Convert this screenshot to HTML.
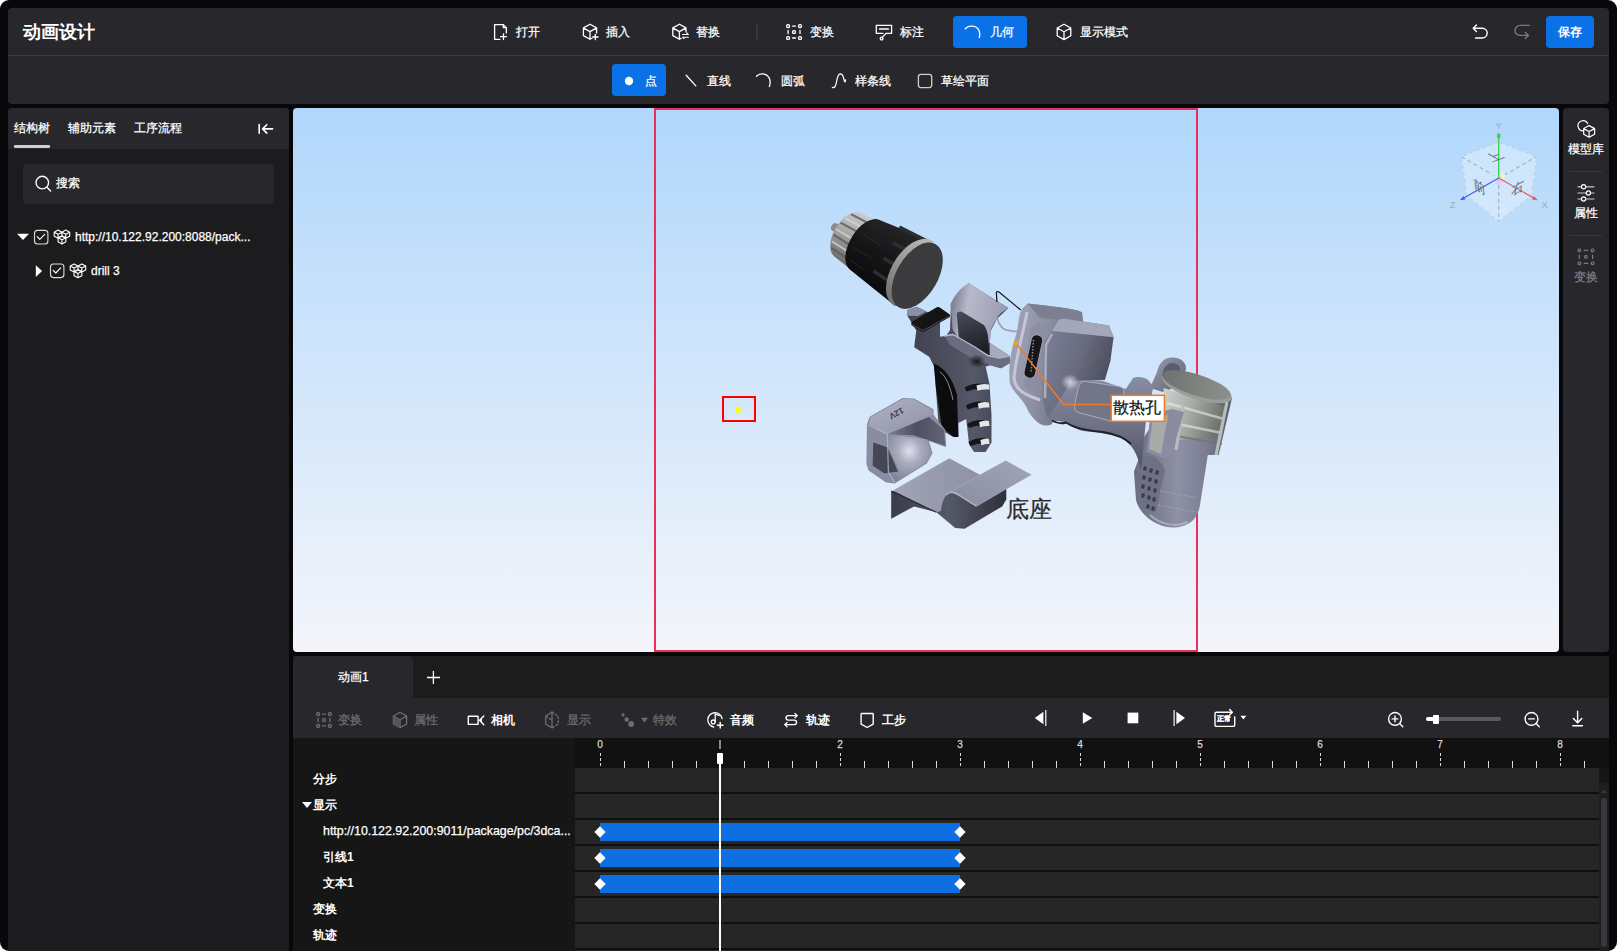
<!DOCTYPE html>
<html><head><meta charset="utf-8">
<style>
*{margin:0;padding:0;box-sizing:border-box}
html,body{width:1617px;height:951px;overflow:hidden;background:#fff}
body{font-family:"Liberation Sans",sans-serif;color:#fff;position:relative}
.abs{position:absolute}
#frame{position:absolute;left:0;top:0;width:1617px;height:951px;background:#08080b;border-radius:9px}
.panel{position:absolute;background:#28282c;border-radius:4px}
.t{position:absolute;white-space:nowrap;font-size:12.25px;line-height:16px;font-weight:500;-webkit-text-stroke:0.25px currentColor}
svg{position:absolute;overflow:visible}
</style></head><body>
<div id="frame"></div>
<!-- header -->
<div class="panel" style="left:8px;top:8px;width:1601px;height:96px"></div>
<div class="abs" style="left:8px;top:55px;width:1601px;height:1px;background:#3c3c40"></div>
<div class="t" style="left:23px;top:22px;font-size:18px;line-height:20px;font-weight:bold;-webkit-text-stroke:0">动画设计</div>


<!-- header toolbar -->
<svg style="left:0;top:0" width="1617" height="110" fill="none" stroke="#fff" stroke-width="1.3" stroke-linejoin="round" stroke-linecap="round">
 <!-- open -->
 <path d="M500 39.3H494.6V24.6H503.3L506.3 27.6V33"/><path d="M503.3 24.6V27.6H506.3"/>
 <path d="M503.5 33.8V39.6M500.6 36.7H506.4"/>
 <!-- insert cube -->
 <path d="M590 24.3L596.6 27.9V33M590 24.3L583.4 27.9V35.6L590 39.3L592 38.2M583.4 27.9L590 31.6L596.6 27.9M590 31.6V39.3"/>
 <path d="M595.3 34.3V39.7M592.6 37H598"/>
 <!-- replace cube -->
 <path d="M679.4 24.3L686 27.9V32M679.4 24.3L672.8 27.9V35.6L679.4 39.3L681 38.4M672.8 27.9L679.4 31.6L686 27.9M679.4 31.6V39.3"/>
 <path d="M682.5 34.5H688.3L686.8 33M688.3 37.2H682.5L684 38.7" stroke-width="1.1"/>
 <!-- separator -->
 <path d="M757 23.5V39.5" stroke="#48484c" stroke-width="1"/>
 <!-- transform -->
 <g stroke-width="1.3">
 <rect x="786.7" y="24.7" width="2.8" height="2.8" rx="1"/><rect x="798.6" y="24.7" width="2.8" height="2.8" rx="1"/>
 <rect x="786.7" y="36.6" width="2.8" height="2.8" rx="1"/><rect x="798.6" y="36.6" width="2.8" height="2.8" rx="1"/>
 <rect x="792.6" y="30.6" width="2.8" height="2.8" rx="1"/>
 <path d="M792.5 26.1H795.5M792.5 38H795.5M788.1 30.5V33.5M800 30.5V33.5"/>
 </g>
 <!-- annotate -->
 <path d="M883 33.3H876.3V25.3H891.6V33.3H886.3L882.6 36.9"/>
 <path d="M879.5 29H888.5" stroke-width="1.3"/>
 <circle cx="881.6" cy="38.6" r="1.4"/>
 <!-- display mode cube -->
 <path d="M1064 24.2L1070.8 28V35.8L1064 39.6L1057.2 35.8V28ZM1057.2 28L1064 31.8L1070.8 28M1064 31.8V39.6"/>
</svg>
<div class="t" style="left:516px;top:24px">打开</div>
<div class="t" style="left:606px;top:24px">插入</div>
<div class="t" style="left:696px;top:24px">替换</div>
<div class="t" style="left:810px;top:24px">变换</div>
<div class="t" style="left:900px;top:24px">标注</div>
<div class="abs" style="left:953px;top:16px;width:74px;height:32px;background:#0a71e6;border-radius:4px"></div>
<svg style="left:0;top:0" width="1100" height="60" fill="none" stroke="#fff" stroke-width="1.4" stroke-linecap="round"><path d="M965.2 28.8C968.5 25 976.5 25 979 30.5C980 32.5 980 35 979.3 37.4"/></svg>
<div class="t" style="left:990px;top:24px">几何</div>
<div class="t" style="left:1080px;top:24px">显示模式</div>

<!-- undo redo save -->
<svg style="left:0;top:0" width="1617" height="60" fill="none" stroke-width="1.4" stroke-linecap="round" stroke-linejoin="round">
 <path d="M1473.3 28.2H1482.2C1485.1 28.2 1487.2 30.4 1487.2 33.1C1487.2 35.8 1485.1 38 1482.2 38H1475.5M1476.4 25L1473.2 28.2L1476.4 31.4" stroke="#fff"/>
 <path d="M1529.3 25.4H1520.2C1517.2 25.4 1515 27.7 1515 30.4C1515 33.1 1517.2 35.4 1520.2 35.4H1528.2M1525.2 32.2L1528.4 35.4L1525.2 38.6" stroke="#7a7a7e"/>
</svg>
<div class="abs" style="left:1546px;top:16px;width:48px;height:32px;background:#0a71e6;border-radius:4px"></div>
<div class="t" style="left:1558px;top:24px;font-weight:bold;-webkit-text-stroke:0">保存</div>

<!-- sub toolbar -->
<div class="abs" style="left:612px;top:64px;width:54px;height:32px;background:#0a71e6;border-radius:4px"></div>
<svg style="left:0;top:0" width="1617" height="110" fill="none" stroke="#fff" stroke-width="1.3" stroke-linecap="round">
 <circle cx="629" cy="81" r="4.2" fill="#fff" stroke="none"/>
 <path d="M686.2 75.3L695.8 85.9"/>
 <path d="M756.5 76.2C759.5 72.8 766.5 73 769.2 78C770.4 80.5 770.4 83.6 769.4 86.5"/>
 <path d="M832.4 87.4C834.5 88.5 835.8 86 836.5 82C837.3 77 838.2 74 840.3 73.9C842.3 73.9 843.2 76 843.8 78.8C844.4 81.5 845 83.5 845.6 80" />
 <rect x="918.4" y="74.3" width="13.3" height="13.3" rx="2.5" stroke="#d0d0d0"/>
</svg>
<div class="t" style="left:645px;top:73px">点</div>
<div class="t" style="left:707px;top:73px">直线</div>
<div class="t" style="left:781px;top:73px">圆弧</div>
<div class="t" style="left:855px;top:73px">样条线</div>
<div class="t" style="left:941px;top:73px">草绘平面</div>

<!-- left panel -->
<div class="panel" style="left:8px;top:108px;width:281px;height:843px;background:#1c1c1e;border-radius:4px 4px 0 0"></div>
<div class="abs" style="left:8px;top:108px;width:281px;height:41px;background:#28282c;border-radius:4px 4px 0 0"></div>


<!-- left panel contents -->
<div class="t" style="left:14px;top:120px;font-size:12px">结构树</div>
<div class="t" style="left:68px;top:120px;font-size:12px">辅助元素</div>
<div class="t" style="left:134px;top:120px;font-size:12px">工序流程</div>
<div class="abs" style="left:14px;top:145px;width:36px;height:3px;background:#cfcfd2;border-radius:1px"></div>
<svg style="left:0;top:0" width="300" height="300" fill="none" stroke="#fff" stroke-width="1.4" stroke-linecap="round" stroke-linejoin="round">
 <path d="M259.2 124.5V133.3M262.6 128.9H272.6M266.8 124.7L262.6 128.9L266.8 133.1" stroke-width="1.6"/>
</svg>
<div class="abs" style="left:23px;top:164px;width:251px;height:40px;background:#28282c;border-radius:4px"></div>
<svg style="left:0;top:0" width="300" height="300" fill="none" stroke="#fff" stroke-width="1.4" stroke-linecap="round">
 <circle cx="42.3" cy="182.6" r="6.3"/><path d="M47 187.3L50.6 190.9"/>
</svg>
<div class="t" style="left:56px;top:175px;font-size:12px">搜索</div>
<!-- tree -->
<svg style="left:0;top:0" width="300" height="300" fill="none" stroke="#fff" stroke-width="1.1" stroke-linecap="round" stroke-linejoin="round">
 <path d="M17 233.7H29L23 240Z" fill="#fff" stroke="none"/>
 <rect x="34.5" y="230.4" width="13.4" height="13.6" rx="3" stroke="#ddd"/>
 <path d="M37.2 236.7L39.8 239.4L44.7 234.3"/>
 <path d="M35.8 265.2V277L42.1 271.1Z" fill="#fff" stroke="none"/>
 <rect x="50.5" y="264" width="13.4" height="13.6" rx="3" stroke="#ddd"/>
 <path d="M53.2 270.3L55.8 273L60.7 267.9"/>
</svg>
<svg style="left:0;top:0" width="300" height="300" fill="none" stroke="#fff" stroke-width="1.1" stroke-linejoin="round">
 <g id="mdl"><path d="M58.1 230.1L62.0 232.14999999999998V236.25L58.1 238.29999999999998L54.2 236.25V232.14999999999998ZM54.2 232.14999999999998L58.1 234.2L62.0 232.14999999999998M58.1 234.2V238.29999999999998M65.8 230.1L69.7 232.14999999999998V236.25L65.8 238.29999999999998L61.9 236.25V232.14999999999998ZM61.9 232.14999999999998L65.8 234.2L69.7 232.14999999999998M65.8 234.2V238.29999999999998M61.95 235.70000000000002L65.85000000000001 237.75V241.85000000000002L61.95 243.9L58.050000000000004 241.85000000000002V237.75ZM58.050000000000004 237.75L61.95 239.8L65.85000000000001 237.75M61.95 239.8V243.9"/></g>
 <use href="#mdl" x="16" y="33.8"/>
</svg>
<div class="t" style="left:75px;top:229px;font-size:12px">http://10.122.92.200:8088/pack...</div>
<div class="t" style="left:91px;top:262.5px;font-size:12px">drill 3</div>

<!-- viewport -->
<div class="abs" style="left:293px;top:108px;width:1266px;height:544px;border-radius:4px;background:linear-gradient(#b0d7fc,#f4f5fa)"></div>


<!-- viewport overlay -->
<div class="abs" style="left:654px;top:108px;width:544px;height:544px;border:2px solid #e8305a"></div>
<div class="abs" style="left:722px;top:396px;width:34px;height:26px;border:2px solid #f00"></div>
<div class="abs" style="left:734.7px;top:406.7px;width:6.6px;height:6.6px;border-radius:50%;background:#ff0"></div>
<svg style="left:0;top:0" width="1617" height="951">
 <defs>
  <linearGradient id="gSil" x1="0" y1="0" x2="0.3" y2="1"><stop offset="0" stop-color="#d4d4d4"/><stop offset="0.5" stop-color="#a8a8a8"/><stop offset="1" stop-color="#5a5a5a"/></linearGradient>
  <linearGradient id="gBlk" x1="0" y1="0" x2="0.4" y2="1"><stop offset="0" stop-color="#2a2a2c"/><stop offset="1" stop-color="#0e0e10"/></linearGradient>
  <linearGradient id="gBody" x1="0" y1="0" x2="1" y2="1"><stop offset="0" stop-color="#a9acbe"/><stop offset="0.45" stop-color="#8a8da0"/><stop offset="1" stop-color="#5f6273"/></linearGradient>
  <linearGradient id="gBlock" x1="0" y1="0" x2="1" y2="0.5"><stop offset="0" stop-color="#80839a"/><stop offset="0.55" stop-color="#6a6d80"/><stop offset="1" stop-color="#4a4c5a"/></linearGradient>
  <linearGradient id="gBarrel" x1="0" y1="0" x2="0" y2="1"><stop offset="0" stop-color="#8a8da2"/><stop offset="0.55" stop-color="#6e7184"/><stop offset="1" stop-color="#4e5060"/></linearGradient>
  <linearGradient id="gPack" x1="0" y1="0" x2="1" y2="0"><stop offset="0" stop-color="#6a6d80"/><stop offset="0.45" stop-color="#8e91a5"/><stop offset="0.75" stop-color="#7a7d92"/><stop offset="1" stop-color="#55586a"/></linearGradient>
  <linearGradient id="gBell" x1="0" y1="0" x2="1" y2="0.3"><stop offset="0" stop-color="#cfd3cf"/><stop offset="0.5" stop-color="#a9ada9"/><stop offset="1" stop-color="#6f736f"/></linearGradient>
  <linearGradient id="gCap" x1="0" y1="0" x2="1" y2="0"><stop offset="0" stop-color="#6e726e"/><stop offset="1" stop-color="#8e928e"/></linearGradient>
  <linearGradient id="gHandle" x1="0" y1="0" x2="1" y2="0"><stop offset="0" stop-color="#3e404c"/><stop offset="0.65" stop-color="#555868"/><stop offset="1" stop-color="#3a3c48"/></linearGradient>
  <linearGradient id="gShield" x1="0" y1="0" x2="1" y2="0.2"><stop offset="0" stop-color="#6a6d80"/><stop offset="0.35" stop-color="#b8bacb"/><stop offset="1" stop-color="#9a9db0"/></linearGradient>
  <linearGradient id="gBase" x1="0" y1="0" x2="1" y2="0"><stop offset="0" stop-color="#a2a5b8"/><stop offset="1" stop-color="#8e91a4"/></linearGradient>
  <linearGradient id="gBaseD" x1="0" y1="0" x2="1" y2="0"><stop offset="0" stop-color="#3a3c48"/><stop offset="0.5" stop-color="#555868"/><stop offset="1" stop-color="#2e3038"/></linearGradient>
  <radialGradient id="gCup" cx="0.5" cy="0.35" r="0.65"><stop offset="0" stop-color="#dfe1ec"/><stop offset="0.4" stop-color="#a9acbe"/><stop offset="1" stop-color="#80839a"/></radialGradient>
  <linearGradient id="gSil2" x1="0" y1="0" x2="0" y2="1"><stop offset="0" stop-color="#cfcfcf"/><stop offset="0.45" stop-color="#a9a9a9"/><stop offset="1" stop-color="#6a6a6a"/></linearGradient>
  <linearGradient id="gBlk2" x1="0" y1="0" x2="0" y2="1"><stop offset="0" stop-color="#262628"/><stop offset="0.5" stop-color="#161618"/><stop offset="1" stop-color="#0a0a0c"/></linearGradient>
  <linearGradient id="gRing" x1="0" y1="0" x2="0" y2="1"><stop offset="0" stop-color="#b8b8b8"/><stop offset="1" stop-color="#6e6e6e"/></linearGradient>
  <linearGradient id="gPlate" x1="0" y1="0" x2="1" y2="0.3"><stop offset="0" stop-color="#a4a7ba"/><stop offset="0.5" stop-color="#8e91a4"/><stop offset="1" stop-color="#6a6d80"/></linearGradient>
  <linearGradient id="gBump" x1="0" y1="0" x2="1" y2="1"><stop offset="0" stop-color="#9a9db0"/><stop offset="1" stop-color="#5e6172"/></linearGradient>
  <linearGradient id="gWall" x1="0" y1="0" x2="1" y2="0"><stop offset="0" stop-color="#7a7d90"/><stop offset="0.5" stop-color="#4e5060"/><stop offset="1" stop-color="#626578"/></linearGradient>
  <linearGradient id="gTop12" x1="0" y1="0" x2="1" y2="1"><stop offset="0" stop-color="#b0b3c4"/><stop offset="1" stop-color="#8e91a5"/></linearGradient>
  <linearGradient id="gBase2" x1="0" y1="1" x2="1" y2="0"><stop offset="0" stop-color="#8a8da0"/><stop offset="1" stop-color="#a2a5b8"/></linearGradient>
  <linearGradient id="gTongue" x1="0" y1="0" x2="0.3" y2="1"><stop offset="0" stop-color="#4a4c58"/><stop offset="1" stop-color="#1e1f26"/></linearGradient>
  <radialGradient id="gShadow"><stop offset="0" stop-color="#0a0a0c" stop-opacity="0.8"/><stop offset="1" stop-color="#0a0a0c" stop-opacity="0"/></radialGradient>
  <radialGradient id="gHi"><stop offset="0" stop-color="#e4e6f2" stop-opacity="0.85"/><stop offset="1" stop-color="#e4e6f2" stop-opacity="0"/></radialGradient>
 </defs>

 <!-- CHUCK -->
 <g transform="translate(917.2 275.7) rotate(30.4)">
  <path d="M-96 -4.2H-88V4.2H-96A3 4.2 0 0 1 -96 -4.2Z" fill="#8a8a8a"/>
  <path d="M-58 -28.5L-80 -25.5A14.5 25.5 0 0 0 -80 25.5L-58 28.5Z" fill="url(#gSil2)"/>
  <path d="M-88 -19.5L-60 -21M-93 -7L-60 -8M-93 7L-60 8M-88 19.5L-60 21" stroke="#5c5c5c" stroke-width="2.2" opacity="0.8"/>
  <path d="M-91 -13L-60 -14.5M-94 1L-60 1M-91 13.5L-60 14.5" stroke="#dadada" stroke-width="2" opacity="0.7"/>
  <path d="M-4 -37.2L-60 -29A16 29 0 0 0 -60 29L-4 37.2Z" fill="url(#gBlk2)"/>
  <path d="M-40 -33L-8 -35M-38 -16L-8 -18M-38 2L-8 2M-40 18L-8 20" stroke="#2e2e30" stroke-width="3.5"/>
  <path d="M-66 -20L-60 -20M-70 -8L-48 -8M-70 8L-48 8M-66 20L-50 22" stroke="#333" stroke-width="1" opacity="0.6"/>
  <ellipse cx="-6" cy="0" rx="20.8" ry="37.3" fill="url(#gRing)"/>
  <ellipse cx="0" cy="0" rx="20.5" ry="36.6" fill="#3b3b3d"/>
 </g>
 <!-- HANDLE -->
 <path d="M907.5 310L916.8 306.8L926.3 311.6L940 318L940 336.8L946.3 335.7L950 330L951 304L968.4 283.2L1008.3 307.9L996.8 318.9L990.4 331.5L989.9 343.1L1009.4 355.7L1009.9 363.1L1001 368.3L990.4 365.2L985.6 366.5L989.5 384L991.5 415.1L991.5 442.4L985.6 452.1L974 452.1L969.1 444.3L966.2 419L958.4 422.9L958.4 436.5L952.5 436.5L938.9 428.8L934.1 366.5L929.2 356.7L914.2 347.3L914.7 343.1L916.3 330.5L907.4 315.8Z" fill="url(#gHandle)"/>
 <path d="M907.5 310L916.8 306.8L926.3 311.6L918 316L907.4 315.8Z" fill="#8c90a4"/>
 <path d="M933.8 363.8C945 368 952 378 957 394.7L958.4 437L953.7 437C948 433 944 429 941.6 425.6L936 388Z" fill="#0c0c0e"/>
 <path d="M940 372C946 376 950 386 953 400" stroke="#8a8c98" stroke-width="1" fill="none"/>
 <path d="M950.5 304.2C954 296 960 288 968.4 283.2L1008.3 307.9C1002 312 998 315 996.8 318.9C992 325 990.4 331.5 990.4 331.5L989.9 343.1L958.9 338.9L952.6 329.4Z" fill="url(#gShield)"/>
 <path d="M956.8 313.7C958 311 961 311 963.1 312.6L984.1 325.2C988 331 988.3 338.9 988.3 338.9L989.4 355.7L958.9 338.9Z" fill="url(#gTongue)"/>
 <path d="M945 336L951 334L975 347L990 357L1000 358L1009.4 355.7L1009.9 363.1L1001 368.3L990 365L975 360L950 345Z" fill="#6a6d80"/>
 <path d="M944 336L953 334.5L974 346.5L988 355.5L999 358L1009.5 356" stroke="#b8bbcc" stroke-width="1.4" fill="none"/>
 <path d="M989.9 343.1L1009.4 355.7L1000 358L990 355Z" fill="#a9acbe"/>
 <ellipse cx="977" cy="361" rx="9" ry="7" fill="url(#gShadow)"/>
 <g><path d="M964.5 387.5Q974.5 381.5 988.5 384.5L989 389.5Q976.5 387.5 966.5 391.5Z" fill="#16161a"/><path d="M976.5 385.5Q982.5 383.0 989 384.5L989.5 389.5Q982.5 389.0 977.5 390.7Z" fill="#e4e6ee"/><path d="M965.8 405.5Q975.8 399.5 988.5 402.5L989 407.5Q977.8 405.5 967.8 409.5Z" fill="#16161a"/><path d="M977.8 403.5Q983.8 401.0 989 402.5L989.5 407.5Q983.8 407.0 978.8 408.7Z" fill="#e4e6ee"/><path d="M967.1 424Q977.1 418 988.5 421L989 426Q979.1 424 969.1 428Z" fill="#16161a"/><path d="M979.1 422Q985.1 419.5 989 421L989.5 426Q985.1 425.5 980.1 427.2Z" fill="#e4e6ee"/><path d="M968.4 442Q978.4 436 988.5 439L989 444Q980.4 442 970.4 446Z" fill="#16161a"/><path d="M980.4 440Q986.4 437.5 989 439L989.5 444Q986.4 443.5 981.4 445.2Z" fill="#e4e6ee"/></g>
 <path d="M911.6 322.1L936.8 307.3Q938 306.5 939.5 307.3L949.4 314.2Q950.5 315 950 316.5L949.4 317.3L924.2 331.5Q922.8 332.2 921.5 331.5L911.6 325.2Q910.8 323.5 911.6 322.1Z" fill="#141416"/>
 <path d="M912 324.5L923 330.5L949.5 316" stroke="#50505a" stroke-width="1" fill="none"/>
 <path d="M996.3 292.5Q997 291 999 292L1020.7 310M996.3 292.5L997 302" stroke="#1a1a1e" stroke-width="1.3" fill="none"/>
 <path d="M997 318Q1000 328 1006 330L1019 332" stroke="#9a9cab" stroke-width="1.6" fill="none"/>
 <!-- 12V BATTERY CAP -->
 <path d="M867.9 424.7L870.5 417.3L903.1 398.9L913.6 399.5L932.6 410L932.6 415.2L944.1 430L945.2 445.7L927.3 439.4L931.5 453.1L926.2 462.6L894.7 482.5L886.3 481.5L869.5 469.9L867.4 463.6Z" fill="#8a8da2" stroke="#8a8da2" stroke-width="2" stroke-linejoin="round"/>
 <path d="M923 412L944.1 430L945.2 445.7L913.6 435.2L887.3 434.2Z" fill="url(#gWall)"/>
 <path d="M887.3 434.2L927.3 439.4L931.5 453.1L926.2 462.6L894.7 482.5L888.4 472Z" fill="url(#gCup)"/>
 <path d="M870.5 417.3L903.1 398.9L913.6 399.5L932.6 410L932.6 415.2L887.3 434.2L869 424Z" fill="url(#gTop12)"/>
 <text x="0" y="0" transform="translate(896.5 413.5) rotate(151)" font-size="8.5" font-family="Liberation Sans, sans-serif" font-weight="bold" fill="#3a3c48" text-anchor="middle" dominant-baseline="central">12V</text>
 <path d="M872.6 441.5L888 447L898.9 472L884 474L872 466Z" fill="#444756" stroke="#8e91a4" stroke-width="1.2"/>
 <path d="M867.9 424.7L887.3 434.2L888.4 472L894.7 482.5" stroke="#b6b9ca" stroke-width="1.2" fill="none" opacity="0.8"/>
 <!-- BASE -->
 <path d="M891.2 491.1V518.7L914.1 506.4L936.4 512.3L955.2 528.1L964.6 528.7L1002.2 506.4L1006.3 499.4V488.8L976.4 506.4C968 502 958 494 950 492L945.8 494.7Z" fill="url(#gBaseD)"/>
 <path d="M892.9 490.5L949.3 458.2L979.9 474.7L950.5 492.3C946 494 942 500 941 511.1L936.4 512.3Z" fill="url(#gBase)"/>
 <path d="M950.5 492.3L979.9 474.7L1005.7 460.6L1031.6 474.7L976.4 506.4C968 502 958 494 950.5 492.3Z" fill="url(#gBase2)"/>
 <path d="M946 495C950 491 956 492 962 497L976 506" stroke="#b4b7c8" stroke-width="1.2" fill="none"/>
 <path d="M891.2 491.1L936.4 512.3" stroke="#2a2c36" stroke-width="1.2"/>
 <!-- MAIN BODY -->
 <!-- rear bump -->
 <path d="M1150 388L1157 372C1159 364 1163 358 1171 357.5C1180 357 1186 362 1186 368L1183 384L1163 392Z" fill="url(#gBump)"/><path d="M1162 376C1163 368 1167 363 1172 363C1178 363 1181 367 1180 372L1178 380Z" fill="#5a5d70"/>
 <!-- pack -->
 <path d="M1142 440L1165 405L1232 398L1218.7 455L1207.8 455L1200 505C1198 518 1190 527.5 1172 527.5C1155 526.5 1140 515 1136 500L1134 471.4L1142.2 449.5Z" fill="url(#gPack)"/>
 <path d="M1140 458C1150 452 1160 458 1165 470L1156 512C1148 512 1138 505 1137 495Z" fill="#6e7184"/>
 <g fill="#3a3c48"><path d="M1144 466l3 1-1 4-3-1zM1150 468l3 1-1 4-3-1zM1156 470l3 1-1 4-3-1zM1143 475l3 1-1 4-3-1zM1149 477l3 1-1 4-3-1zM1155 479l3 1-1 4-3-1zM1142 484l3 1-1 4-3-1zM1148 486l3 1-1 4-3-1zM1154 488l3 1-1 4-3-1zM1142 493l3 1-1 4-3-1zM1148 495l3 1-1 4-3-1zM1153 497l3 1-1 4-3-1zM1147 504l3 1-1 4-3-1zM1152 506l3 1-1 4-3-1z"/></g>
 <path d="M1160 491L1198 498M1158 505L1196 512" stroke="#a8abbc" stroke-width="0.8" stroke-dasharray="2 1.5" fill="none"/>
 <path d="M1150 515C1160 524 1175 528 1188 522" stroke="#c4c7d6" stroke-width="2" fill="none" opacity="0.6"/>
 <!-- back plate -->
 <path d="M1027.6 303.4C1060 307 1075 309 1082 312.1L1082.8 321.6L1052 424C1042 430 1032 418 1027.6 409.9C1024 400 1016 396 1010 384C1007.5 366 1012 346 1016 335C1019 325 1018 315 1022 308.9Z" fill="url(#gPlate)"/>
 <path d="M1027.6 303.4C1060 307 1075 309 1082 312.1L1082.8 321.6L1040 318Z" fill="#7c7f92"/>
 <path d="M1027 312C1024 330 1016 356 1014 378C1015 388 1022 393 1032 397L1040 400" stroke="#c9cbd9" stroke-width="3" fill="none" opacity="0.9"/>
 <path d="M1038 322C1046 326 1046 340 1044 350L1040 392C1034 392 1026 390 1024 385L1030 330Z" fill="#8a8da0" opacity="0.7"/>
 <rect x="1027.6" y="334.5" width="11.5" height="44" rx="5" transform="rotate(12.5 1033.4 356.5)" fill="#17171b" stroke="#9ea1b2" stroke-width="1"/>
 <path d="M1033.5 340L1031 373" stroke="#8a8a90" stroke-width="1.5" stroke-dasharray="1.5 1.5"/>
 <!-- front block -->
 <path d="M1058.4 320L1063.1 318.4L1108.9 325.5L1113.6 337.3L1110.4 361L1104.9 379.9L1085 381L1075 383L1060 400L1047.3 418L1042.6 400.4L1044.2 342.1L1052.1 331Z" fill="url(#gBlock)"/>
 <path d="M1058.4 320L1063.1 318.4L1108.9 325.5L1113.6 337.3L1062 332L1052.1 331Z" fill="#a4a7ba"/>
 <path d="M1052 334L1046 345L1045 398" stroke="#b8bbcc" stroke-width="2.5" fill="none" opacity="0.8"/>
 <!-- barrel -->
 <path d="M1068 386C1074 381 1078 380 1083 380.3L1103 380.9L1125.8 389.1L1133.3 377.7C1140 376 1146 378 1148.4 380.3L1153.5 386.6L1146 420L1141 470C1138 455 1132 444 1122 438.3C1110 433 1090 432 1081.6 430.7C1074 428 1068 424 1065.2 421.9L1052.6 420.6L1047.3 418L1060 400Z" fill="url(#gBarrel)"/>
 <path d="M1086 381.5L1119 386.5Q1125 388 1123.5 394L1118.5 416Q1117 421.5 1111 421L1080 413Q1073.5 411 1074.5 405L1078.5 387Q1080 381 1086 381.5Z" fill="#737689" stroke="#a9acbd" stroke-width="1"/>
 <path d="M1052 420.5C1058 424 1062 424 1066 422.5C1074 428 1090 431 1103 432C1115 434 1125 438 1131 444" stroke="#1e2028" stroke-width="2" fill="none"/>
 <ellipse cx="1070" cy="382" rx="9" ry="8" fill="url(#gHi)"/>
 <!-- battery bell and cap -->
 <path d="M1163.5 387.9L1226 406.8L1222 438L1176.8 440L1165 420Z" fill="url(#gBell)"/>
 <path d="M1167 403L1224 419M1168 422L1222 433" stroke="#e8ece8" stroke-width="2.5" opacity="0.6"/>
 <path d="M1165 434L1222 444" stroke="#6e726e" stroke-width="2" opacity="0.7"/>
 <ellipse cx="1197" cy="388" rx="36.5" ry="11" transform="rotate(17.5 1197 388)" fill="#9a9e9a"/>
 <ellipse cx="1196.5" cy="385" rx="36" ry="10.5" transform="rotate(17.5 1196.5 385)" fill="url(#gCap)"/>
 <path d="M1183 405L1176 450M1227 402L1216 455" stroke="#b9bdb9" stroke-width="3.2"/>
 <path d="M1150.3 414.4L1172 409L1184 412L1170 460L1146.5 452Z" fill="#8a8da2"/>
 <path d="M1153 418L1168 415L1161 454L1149 449Z" fill="#a9aba9"/>
 <!-- LEADER + LABELS -->
 <path d="M1015.9 342.9L1063.4 404.4H1111" stroke="#f07a22" stroke-width="1.5" fill="none"/>
 <circle cx="1015.9" cy="342.9" r="2.3" fill="#f5a020"/>
 <rect x="1111.2" y="395.3" width="53.2" height="26" fill="#fff" stroke="#f07a22" stroke-width="1.5"/>
</svg>
<div class="t" style="left:1113px;top:398px;font-size:16px;line-height:20px;color:#111">散热孔</div>
<div class="t" style="left:1006px;top:496px;font-size:23px;line-height:27px;color:#2a2a2a;font-family:'Liberation Serif',serif;font-weight:300">底座</div>


<!-- view cube -->
<svg style="left:0;top:0" width="1617" height="300" font-family="Liberation Sans, sans-serif">
 <path d="M1498.7 142.2L1536.5 156.7L1531.5 195.8L1498.7 221L1467 195.8L1461.5 156.7Z" fill="#fff" fill-opacity="0.32" stroke="#fff" stroke-opacity="0.35" stroke-width="0.8"/>
 <path d="M1461.5 156.7L1498.7 178.1L1536.5 156.7M1498.7 178.1V221" stroke="#a8b0ba" stroke-width="1.2" stroke-dasharray="4 3" fill="none"/>
 <path d="M1498.7 142.2L1536.5 156.7L1531.5 195.8L1498.7 221L1467 195.8L1461.5 156.7Z" fill="none" stroke="#b8c4d0" stroke-width="0.8" stroke-dasharray="4 3"/>
 <circle cx="1495" cy="176" r="3.6" fill="#bff0ff" fill-opacity="0.7"/><circle cx="1502" cy="176" r="3.6" fill="#f0f8c8" fill-opacity="0.7"/><circle cx="1498.7" cy="181.5" r="3.6" fill="#e8c8f8" fill-opacity="0.7"/>
 <path d="M1498.7 178.1V137" stroke="#3dd35a" stroke-width="1.4"/><rect x="1497" y="133.5" width="3.4" height="4.5" fill="#3dd35a"/>
 <path d="M1498.7 178.1L1463 198.5" stroke="#4a5cf0" stroke-width="1.2"/><path d="M1459.8 200.3L1463.5 196L1465.5 199.5Z" fill="#4a5cf0"/>
 <path d="M1498.7 178.1L1534.5 198.5" stroke="#e85a5a" stroke-width="1.2"/><path d="M1537.8 200.3L1534 196L1532 199.5Z" fill="#e85a5a"/>
 <g fill="#5c646e" font-size="14" text-anchor="middle" dominant-baseline="central" font-weight="300">
  <text transform="matrix(0.93,-0.36,0.87,0.5,1494,157)">上</text>
  <text transform="matrix(0.87,0.5,0.14,0.99,1479,187)">前</text>
  <text transform="matrix(0.87,-0.49,-0.13,0.99,1518,188)">右</text>
 </g>
 <text x="1498.7" y="128.6" font-size="9.5" fill="#a0acba" text-anchor="middle">Y</text>
 <text x="1452.6" y="208.4" font-size="9.5" fill="#a0acba" text-anchor="middle">Z</text>
 <text x="1544.7" y="208.4" font-size="9.5" fill="#a0acba" text-anchor="middle">X</text>
</svg>

<!-- right sidebar -->
<div class="panel" style="left:1563px;top:108px;width:46px;height:544px"></div>


<!-- right sidebar contents -->
<svg style="left:0;top:0" width="1617" height="300" fill="none" stroke="#fff" stroke-width="1.2" stroke-linejoin="round" stroke-linecap="round">
 <path d="M1587.6 123.4A5.1 5.1 0 1 0 1583.2 130.9"/>
 <path d="M1589.1 125.6L1594.6 128.6V134.3L1589.1 137.3L1583.7 134.3V128.6ZM1583.7 128.6L1589.1 131.5L1594.6 128.6M1589.1 131.5V137.3"/>
 <path d="M1569.6 171.5H1602M1569.6 235.5H1602" stroke="#38383c" stroke-width="1"/>
 <path d="M1578 186.8H1594M1578 193H1594M1578 199H1594" stroke="#ccc"/>
 <circle cx="1583.6" cy="186.8" r="2.1" fill="#28282c"/><circle cx="1588.4" cy="193" r="2.1" fill="#28282c"/><circle cx="1583.6" cy="199" r="2.1" fill="#28282c"/>
 <g stroke="#7c7c80">
 <rect x="1578" y="249" width="2.6" height="2.6" rx="1"/><rect x="1591.3" y="249" width="2.6" height="2.6" rx="1"/>
 <rect x="1578" y="262" width="2.6" height="2.6" rx="1"/><rect x="1591.3" y="262" width="2.6" height="2.6" rx="1"/>
 <rect x="1584.6" y="255.5" width="2.6" height="2.6" rx="1"/>
 <path d="M1584.2 250.3H1587.7M1584.2 263.3H1587.7M1579.3 255.2V258.6M1592.6 255.2V258.6"/>
 </g>
</svg>
<div class="t" style="left:1568px;top:141px;font-size:12px;font-weight:500">模型库</div>
<div class="t" style="left:1574px;top:205px;font-size:12px;font-weight:500">属性</div>
<div class="t" style="left:1574px;top:269px;font-size:12px;color:#7c7c80">变换</div>


<!-- bottom panel -->
<div class="abs" style="left:293px;top:656px;width:1316px;height:295px;background:#1c1c1c"></div>
<div class="abs" style="left:293px;top:656px;width:120px;height:42px;background:#28282c;border-radius:4px 4px 0 0"></div>
<div class="t" style="left:338px;top:669px;font-size:12px">动画1</div>
<svg style="left:0;top:0" width="1617" height="951" fill="none" stroke="#fff" stroke-width="1.3">
 <path d="M433.4 671V684M427 677.5H440"/>
</svg>
<div class="abs" style="left:293px;top:698px;width:1316px;height:40px;background:#28282c"></div>

<!-- bottom toolbar -->
<svg style="left:0;top:0" width="1617" height="951" fill="none" stroke-width="1.3" stroke-linecap="round" stroke-linejoin="round">
 <g stroke="#6e6e6e">
  <rect x="316.7" y="712.7" width="2.8" height="2.8" rx="1"/><rect x="328.5" y="712.7" width="2.8" height="2.8" rx="1"/>
  <rect x="316.7" y="724.5" width="2.8" height="2.8" rx="1"/><rect x="328.5" y="724.5" width="2.8" height="2.8" rx="1"/>
  <rect x="322.6" y="718.6" width="2.8" height="2.8" rx="1"/>
  <path d="M322.5 714.1H325.5M322.5 725.9H325.5M318.1 718.5V721.5M329.9 718.5V721.5"/>
  <path d="M400 712.3L406.6 716V724L400 727.7L393.4 724V716ZM393.4 716L400 719.8L406.6 716M400 719.8V727.7"/>
  <path d="M393.4 716L400 719.8V727.7L393.4 724Z" fill="#555" stroke="none"/>
  <path d="M552 712L545.7 716.3V724L552 728V712Z"/>
  <path d="M552 712L558.2 716.3V724L552 728M545.7 716.3L552 720" stroke-dasharray="2 2"/>
  <path d="M641 717.8H648L644.5 722.4Z" fill="#6e6e6e" stroke="none"/>
 </g>
 <g fill="#6e6e6e"><circle cx="623" cy="714.9" r="1.7"/><circle cx="626.7" cy="719.5" r="2.2"/><circle cx="631.1" cy="724" r="2.9"/></g>
 <g stroke="#fff">
  <rect x="468.3" y="716.2" width="9.8" height="8.2" rx="0.5" stroke-width="1.4"/>
  <path d="M483.8 715.9L479.6 720.3L483.8 724.7M481.2 718.8V721.9" stroke-width="1.4"/>
  <path d="M722.1 718.6A7.2 7.2 0 1 0 713.7 727" stroke-width="1.3"/>
  <path d="M715.2 721.8V713.8L719.3 715.6" stroke-width="1.3"/>
  <circle cx="713.2" cy="721.9" r="1.9" stroke-width="1.3"/>
  <path d="M720.2 722.4V728M717.4 725.2H723" stroke-width="1.5"/>
  <path d="M797 715.6H788.3A2.25 2.25 0 0 0 788.3 720.1H794.3A2.25 2.25 0 0 1 794.3 724.6H785" stroke-width="1.4"/>
  <path d="M795 713.5L797.2 715.6L795 717.7M787 722.5L784.8 724.6L787 726.7" stroke-width="1.3"/>
  <path d="M861.1 714.2Q861.1 713.5 861.8 713.5H872.5Q873.2 713.5 873.2 714.2V724.2L867.1 727.5L861.1 724.2Z" stroke-width="1.4"/>
 </g>
</svg>
<div class="t" style="left:338px;top:712px;font-size:12px;color:#6e6e6e">变换</div>
<div class="t" style="left:414px;top:712px;font-size:12px;color:#6e6e6e">属性</div>
<div class="t" style="left:491px;top:712px;font-size:12px;font-weight:bold;-webkit-text-stroke:0">相机</div>
<div class="t" style="left:567px;top:712px;font-size:12px;color:#6e6e6e">显示</div>
<div class="t" style="left:653px;top:712px;font-size:12px;color:#6e6e6e">特效</div>
<div class="t" style="left:730px;top:712px;font-size:12px;font-weight:bold;-webkit-text-stroke:0">音频</div>
<div class="t" style="left:806px;top:712px;font-size:12px;font-weight:bold;-webkit-text-stroke:0">轨迹</div>
<div class="t" style="left:882px;top:712px;font-size:12px;font-weight:bold;-webkit-text-stroke:0">工步</div>
<!-- playback -->
<svg style="left:0;top:0" width="1617" height="951" fill="#fff" stroke="none">
 <path d="M1034.8 718L1043.4 711.8V724.2Z"/><rect x="1045" y="710" width="1.5" height="16" fill="#d9c9c9"/>
 <path d="M1082.8 712.3L1092.3 718L1082.8 723.7Z"/>
 <rect x="1127.6" y="712.6" width="10.7" height="10.7"/>
 <rect x="1173.4" y="710" width="1.5" height="16" fill="#d9c9c9"/><path d="M1176.4 711.8L1185 718L1176.4 724.2Z"/>
 <path d="M1240.5 715.8H1246.3L1243.4 719.4Z"/>
</svg>
<svg style="left:0;top:0" width="1617" height="951" fill="none" stroke="#fff" stroke-width="1.4" stroke-linecap="round" stroke-linejoin="round">
 <path d="M1231.9 712.3H1216.5Q1215 712.3 1215 713.8V724.9Q1215 726.4 1216.5 726.4H1233.2Q1234.7 726.4 1234.7 724.9V717"/>
 <path d="M1229.6 709.5L1232.3 712.3L1229.6 715"/>
</svg>
<div class="t" style="left:1217px;top:714px;font-size:7px;line-height:10px;font-weight:bold;letter-spacing:-0.5px">正常</div>
<!-- zoom slider download -->
<svg style="left:0;top:0" width="1617" height="951" fill="none" stroke="#fff" stroke-width="1.4" stroke-linecap="round">
 <circle cx="1395" cy="718.9" r="6.4"/><path d="M1399.6 723.5L1402.8 726.7M1395 716V721.8M1392.1 718.9H1397.9"/>
 <circle cx="1531.5" cy="718.9" r="6.4"/><path d="M1536.1 723.5L1539.3 726.7M1528.6 718.9H1534.4"/>
 <path d="M1577.6 711.2V722.6M1573.4 718.5L1577.6 722.8L1581.8 718.5M1572.8 725.7H1582.4"/>
</svg>
<div class="abs" style="left:1426px;top:717px;width:75px;height:4px;background:#5a5a5e;border-radius:2px"></div>
<div class="abs" style="left:1426px;top:717px;width:10px;height:4px;background:#fff;border-radius:2px"></div>
<div class="abs" style="left:1433px;top:714.5px;width:5.5px;height:9px;background:#fff;border-radius:1px"></div>
<div class="abs" style="left:293px;top:738px;width:282px;height:213px;background:#161616"></div>
<div class="abs" style="left:575px;top:738px;width:1034px;height:30px;background:#111"></div>
<div class="abs" style="left:575px;top:768px;width:1024px;height:183px;background:#0f0f0f"></div><div class="abs" style="left:1599px;top:768px;width:10px;height:183px;background:#161616"></div>
<div class="abs" style="left:575px;top:768px;width:1024px;height:24px;background:#262626"></div><div class="abs" style="left:575px;top:794px;width:1024px;height:24px;background:#262626"></div><div class="abs" style="left:575px;top:820px;width:1024px;height:24px;background:#262626"></div><div class="abs" style="left:575px;top:846px;width:1024px;height:24px;background:#262626"></div><div class="abs" style="left:575px;top:872px;width:1024px;height:24px;background:#262626"></div><div class="abs" style="left:575px;top:898px;width:1024px;height:24px;background:#262626"></div><div class="abs" style="left:575px;top:924px;width:1024px;height:24px;background:#262626"></div><div class="abs" style="left:575px;top:950px;width:1024px;height:1px;background:#262626"></div>
<div class="abs" style="left:1599px;top:783px;width:10px;height:168px;background:#1e1e1e"></div>
<div class="abs" style="left:1601px;top:798px;width:6px;height:149px;background:#37373c;border-radius:3px"></div>
<svg style="left:0;top:0" width="1617" height="951"><path d="M1601 793L1604 789.5L1607 793Z" fill="#3a3a3e"/></svg>
<svg style="left:0;top:0" width="1617" height="951" fill="none" stroke="#d8d8d8" stroke-width="1"><path d="M600.5 753V756M600.5 758V761M600.5 763V766M624.5 761V768M648.5 761V768M672.5 761V768M696.5 761V768M720.5 753V756M720.5 758V761M720.5 763V766M744.5 761V768M768.5 761V768M792.5 761V768M816.5 761V768M840.5 753V756M840.5 758V761M840.5 763V766M864.5 761V768M888.5 761V768M912.5 761V768M936.5 761V768M960.5 753V756M960.5 758V761M960.5 763V766M984.5 761V768M1008.5 761V768M1032.5 761V768M1056.5 761V768M1080.5 753V756M1080.5 758V761M1080.5 763V766M1104.5 761V768M1128.5 761V768M1152.5 761V768M1176.5 761V768M1200.5 753V756M1200.5 758V761M1200.5 763V766M1224.5 761V768M1248.5 761V768M1272.5 761V768M1296.5 761V768M1320.5 753V756M1320.5 758V761M1320.5 763V766M1344.5 761V768M1368.5 761V768M1392.5 761V768M1416.5 761V768M1440.5 753V756M1440.5 758V761M1440.5 763V766M1464.5 761V768M1488.5 761V768M1512.5 761V768M1536.5 761V768M1560.5 753V756M1560.5 758V761M1560.5 763V766M1584.5 761V768"/></svg>
<div class="t" style="left:590px;top:739px;width:20px;text-align:center;font-size:10px;line-height:12px;color:#d8d8d8">0</div><div class="abs" style="left:719px;top:740px;width:2px;height:9px;background:#8a8a8a"></div><div class="t" style="left:830px;top:739px;width:20px;text-align:center;font-size:10px;line-height:12px;color:#d8d8d8">2</div><div class="t" style="left:950px;top:739px;width:20px;text-align:center;font-size:10px;line-height:12px;color:#d8d8d8">3</div><div class="t" style="left:1070px;top:739px;width:20px;text-align:center;font-size:10px;line-height:12px;color:#d8d8d8">4</div><div class="t" style="left:1190px;top:739px;width:20px;text-align:center;font-size:10px;line-height:12px;color:#d8d8d8">5</div><div class="t" style="left:1310px;top:739px;width:20px;text-align:center;font-size:10px;line-height:12px;color:#d8d8d8">6</div><div class="t" style="left:1430px;top:739px;width:20px;text-align:center;font-size:10px;line-height:12px;color:#d8d8d8">7</div><div class="t" style="left:1550px;top:739px;width:20px;text-align:center;font-size:10px;line-height:12px;color:#d8d8d8">8</div>
<div class="abs" style="left:600px;top:823px;width:360px;height:18px;background:#0d6fe0"></div><div class="abs" style="left:596px;top:828px;width:8px;height:8px;background:#fff;transform:rotate(45deg)"></div><div class="abs" style="left:956px;top:828px;width:8px;height:8px;background:#fff;transform:rotate(45deg)"></div><div class="abs" style="left:600px;top:849px;width:360px;height:18px;background:#0d6fe0"></div><div class="abs" style="left:596px;top:854px;width:8px;height:8px;background:#fff;transform:rotate(45deg)"></div><div class="abs" style="left:956px;top:854px;width:8px;height:8px;background:#fff;transform:rotate(45deg)"></div><div class="abs" style="left:600px;top:875px;width:360px;height:18px;background:#0d6fe0"></div><div class="abs" style="left:596px;top:880px;width:8px;height:8px;background:#fff;transform:rotate(45deg)"></div><div class="abs" style="left:956px;top:880px;width:8px;height:8px;background:#fff;transform:rotate(45deg)"></div>
<div class="abs" style="left:719px;top:753px;width:2px;height:198px;background:#fff"></div>
<div class="abs" style="left:717px;top:753px;width:6px;height:11px;background:#fff;border-radius:1px"></div>
<div class="t" style="left:313px;top:771px;font-size:12px;font-weight:bold;-webkit-text-stroke:0">分步</div>
<svg style="left:0;top:0" width="600" height="951"><path d="M302 802H312L307 808Z" fill="#fff"/></svg>
<div class="t" style="left:313px;top:797px;font-size:12px;font-weight:bold;-webkit-text-stroke:0">显示</div>
<div class="t" style="left:323px;top:823px;font-size:12.4px;font-weight:500">http://10.122.92.200:9011/package/pc/3dca...</div>
<div class="t" style="left:323px;top:849px;font-size:12px;font-weight:bold;-webkit-text-stroke:0">引线1</div>
<div class="t" style="left:323px;top:875px;font-size:12px;font-weight:bold;-webkit-text-stroke:0">文本1</div>
<div class="t" style="left:313px;top:901px;font-size:12px;font-weight:bold;-webkit-text-stroke:0">变换</div>
<div class="t" style="left:313px;top:927px;font-size:12px;font-weight:bold;-webkit-text-stroke:0">轨迹</div>

</body></html>
